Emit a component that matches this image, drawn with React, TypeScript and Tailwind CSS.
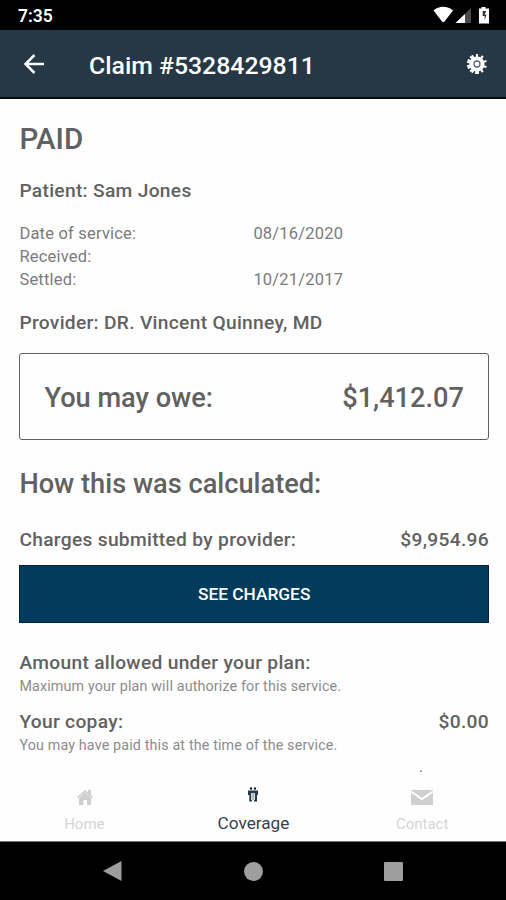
import React from "react";

function StatusBar() {
  return (
    <div className="flex h-[30px] shrink-0 items-center justify-between bg-black pl-[18px] pr-[15px] pt-[2px]">
      <span className="text-[17.500px] font-semibold leading-[28px] text-white">7:35</span>
      <svg width="58" height="20" viewBox="0 0 58 20" className="block">
        <path d="M0.5 4.500C6-0.500 14.500-0.500 20 4.500L11.500 15.500Q10.200 17 9 15.500Z" fill="#fff" />
        <path d="M38 2v15H22.500z" fill="#4a4a4a" />
        <path d="M32 8v9H22.500z" fill="#fff" />
        <path d="M46 2.500h2.500V1h4v1.500H56V17.500H46z" fill="#fff" />
        <path d="M53.300 5h-3.600v5h2v4.500l1.800-6h-2z" fill="#333" />
      </svg>
    </div>
  );
}

function Header() {
  return (
    <div className="flex h-[69px] shrink-0 items-center border-b-2 border-[#080d12] bg-[#263746] pl-[23px] pr-[18px] text-white">
      <svg width="22" height="22" viewBox="0 0 22 22" fill="none" stroke="#fff" strokeWidth="2.500" className="mt-[1px]">
        <path d="M21 11H2.500M11.500 2L2.500 11l9 9" />
      </svg>
      <h1 className="ml-[44px] mt-[4px] flex-1 whitespace-nowrap text-[24.800px] font-medium leading-[30px]">Claim #5328429811</h1>
      <svg width="22" height="22" viewBox="0 0 22 22" fill="#fff" className="mt-[1px]">
        <circle cx="11" cy="11" r="7.600" />
        <path d="M10 1h2l1 20H9z" />
        <path d="M10 1h2l1 20H9z" transform="rotate(36 11 11)" />
        <path d="M10 1h2l1 20H9z" transform="rotate(72 11 11)" />
        <path d="M10 1h2l1 20H9z" transform="rotate(108 11 11)" />
        <path d="M10 1h2l1 20H9z" transform="rotate(144 11 11)" />
        <circle cx="11" cy="11" r="3" fill="none" stroke="#596672" strokeWidth="1.300" />
      </svg>
    </div>
  );
}

function DateRow({ label, value }: { label: string; value?: string }) {
  return (
    <div className="flex h-[23px] text-[16.500px] leading-[23px] tracking-[0.200px] text-[#7b7b7b]">
      <span className="w-[234px]">{label}</span>
      <span>{value}</span>
    </div>
  );
}

function TabBar() {
  return (
    <div className="grid h-[61px] shrink-0 grid-cols-3 border-b border-[#777] text-[16px]">
      <div className="flex flex-col items-center text-[#d5d5d5]">
        <svg width="16" height="16" viewBox="0 0 16 16" className="ml-[1px] mt-[8px] block" fill="#cfcfcf">
          <path d="M0 8L8 1l3 2.600V1h3v5.200L16 8l-1 1.200L8 3.200 1 9.200z" />
          <path d="M2 9l6-5.500L14 9V16h-4v-5H6.500v5H2z" />
        </svg>
        <span className="mt-[9px] text-[15px] leading-[20px]">Home</span>
      </div>
      <div className="flex flex-col items-center text-[#36424d]">
        <svg width="10" height="15" viewBox="0 0 10 15" className="ml-[1px] mt-[6px] block">
          <circle cx="3" cy="1.500" r="1.200" fill="#17222b" />
          <circle cx="7" cy="1.500" r="1.200" fill="#17222b" />
          <path d="M0 3.500h10V8H9v6.500H6V9H4v5.500H1.300V8H0z" fill="#263746" />
          <path d="M3 6h4v7H3z" fill="#d5dde2" />
          <path d="M5 5v8" stroke="#657785" strokeWidth=".7" />
        </svg>
        <span className="ml-[1px] mt-[10px] text-[17.200px] leading-[22px]">Coverage</span>
      </div>
      <div className="flex flex-col items-center text-[#d5d5d5]">
        <svg width="22" height="15" viewBox="0 0 22 15" className="ml-[1px] mt-[9px] block">
          <path d="M0 0h22v15H0z" fill="#cfcfcf" />
          <path d="M0 1.500l11 7.500 11-7.500" fill="none" stroke="#fff" strokeWidth="2" />
        </svg>
        <span className="ml-[1px] mt-[9px] text-[15px] leading-[20px]">Contact</span>
      </div>
    </div>
  );
}

function SystemNav() {
  return (
    <div className="flex h-[58px] shrink-0 items-center justify-between bg-black pl-[102px] pr-[103px]">
      <svg width="20" height="22" viewBox="0 0 20 22"><path d="M1 11L19.500 1v20z" fill="#9e9e9e" /></svg>
      <div className="size-[19px] rounded-full bg-[#9e9e9e]" />
      <div className="size-[19px] rounded-[1px] bg-[#9e9e9e]" />
    </div>
  );
}

export default function App() {
  return (
    <div className="flex h-[900px] w-[506px] flex-col overflow-hidden bg-[#fefefe] font-[Roboto,sans-serif]">
      <StatusBar />
      <Header />
      <main className="flex h-[682px] shrink-0 flex-col overflow-hidden pl-[19.400px] pr-[17px] text-[#616161]">
        <h2 className="mt-[23px] text-[29.500px] font-medium leading-[34px]">PAID</h2>
        <p className="mt-[23px] text-[19.200px] font-medium leading-[24px] tracking-[0.300px]">Patient: Sam Jones</p>
        <section className="mt-[19px]">
          <DateRow label="Date of service:" value="08/16/2020" />
          <DateRow label="Received:" />
          <DateRow label="Settled:" value="10/21/2017" />
        </section>
        <p className="mt-[20px] text-[19.200px] font-medium leading-[24px] tracking-[0.300px]">Provider: DR. Vincent Quinney, MD</p>
        <div className="mt-[18px] flex h-[87px] items-center justify-between rounded-[3px] border-[1.500px] border-[#606060] px-[24px] pt-[4px] text-[27.200px] font-medium">
          <span>You may owe:</span>
          <span>$1,412.07</span>
        </div>
        <h3 className="mt-[27px] text-[27.200px] font-medium leading-[34px]">How this was calculated:</h3>
        <div className="mt-[27px] flex justify-between text-[19.200px] font-medium leading-[24px] tracking-[0.300px]">
          <span>Charges submitted by provider:</span>
          <span>$9,954.96</span>
        </div>
        <button className="mt-[13px] h-[58px] shrink-0 border border-[#062044] bg-[#023b5c] pt-[2px] text-[17.300px] font-medium text-white">SEE CHARGES</button>
        <p className="mt-[28px] text-[19.200px] font-medium leading-[24px] tracking-[0.300px]">Amount allowed under your plan:</p>
        <p className="text-[14.300px] leading-[22px] tracking-[0.150px] text-[#8c8c8c]">Maximum your plan will authorize for this service.</p>
        <div className="mt-[13px] flex justify-between text-[19.200px] font-medium leading-[24px] tracking-[0.300px]">
          <span>Your copay:</span>
          <span>$0.00</span>
        </div>
        <p className="text-[14.300px] leading-[22px] tracking-[0.150px] text-[#8c8c8c]">You may have paid this at the time of the service.</p>
        <div className="ml-[401px] mt-[14px] h-[2px] w-[2px] shrink-0 bg-[#aaa]" />
      </main>
      <TabBar />
      <SystemNav />
    </div>
  );
}
